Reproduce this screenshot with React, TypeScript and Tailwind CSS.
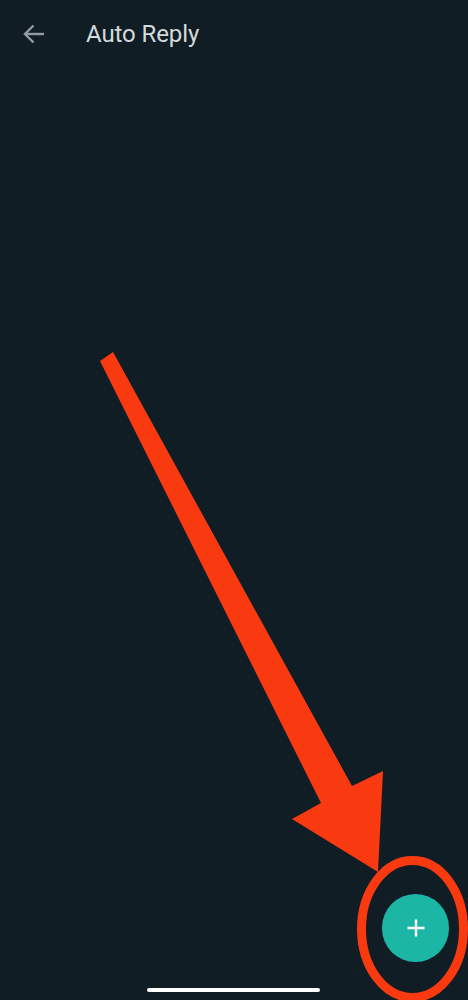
export default function App() {
  return (
    <div className="relative h-[1000px] w-[468px] overflow-hidden bg-[#111d25] font-['Roboto',sans-serif]">
      <header className="flex h-[68px] items-center pl-[23px]">
        <svg width="22" height="20" viewBox="0 0 22 20" fill="none" stroke="#929ba1" strokeWidth="2.4">
          <path d="M21 10H2.500" />
          <path d="M10.500 1.500 2 10l8.500 8.500" />
        </svg>
        <h1 className="ml-[41px] text-[24px] font-normal tracking-[-0.1px] text-[#d3d9dc]">Auto Reply</h1>
      </header>

      {/* annotation drawn over the screenshot */}
      <svg className="absolute inset-0" width="468" height="1000" viewBox="0 0 468 1000" fill="none">
        <path d="M100 361 113 352 352 786 383 771 378 872 292 819 321 803Z" fill="#f93a10" />
        <ellipse cx="412.500" cy="929" rx="51" ry="68.500" stroke="#f93a10" strokeWidth="9" />
      </svg>

      <button className="absolute left-[382px] top-[894px] flex h-[68px] w-[67px] items-center justify-center rounded-full bg-[#1bb7a4]">
        <svg width="18" height="18" viewBox="0 0 18 18" stroke="#ffffff" strokeWidth="2.400">
          <path d="M9 0.500v17M0.500 9h17" />
        </svg>
      </button>

      <div className="absolute bottom-[8px] left-[147px] h-[4px] w-[173px] rounded-full bg-white" />
    </div>
  );
}
